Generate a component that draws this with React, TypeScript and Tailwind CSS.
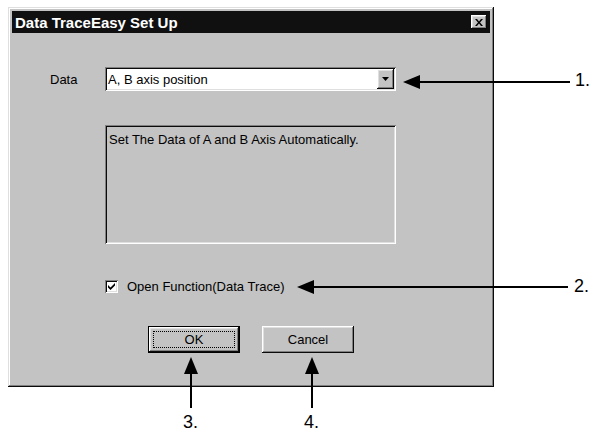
import React from "react";

const raised =
  "shadow-[inset_-1px_-1px_#0a0a0a,inset_1px_1px_#ffffff,inset_-2px_-2px_#808080,inset_2px_2px_#dfdfdf]";
const sunken =
  "shadow-[inset_1px_1px_#808080,inset_-1px_-1px_#ffffff,inset_2px_2px_#0a0a0a,inset_-2px_-2px_#dfdfdf]";

function CloseButton() {
  return (
    <div className={`w-[16px] h-[14px] bg-[#c3c3c3] flex items-center justify-center ${raised}`}>
      <svg width="8" height="7" viewBox="0 0 8 7">
        <path d="M0 0h2l2 2.5L6 0h2L5 3.5 8 7H6L4 4.5 2 7H0l3-3.5z" fill="#000" />
      </svg>
    </div>
  );
}

function DropArrow() {
  return (
    <div className={`w-[17px] h-full bg-[#c3c3c3] flex items-center justify-center ${raised}`}>
      <svg width="7" height="4" viewBox="0 0 7 4">
        <path d="M0 0h7L3.5 4z" fill="#000" />
      </svg>
    </div>
  );
}

function Checkbox() {
  return (
    <div className={`w-[13px] h-[13px] bg-white flex items-center justify-center ${sunken}`}>
      <svg width="7" height="7" viewBox="0 0 7 7">
        <path d="M0 2l2.5 2.5L7 0v2.5L2.5 7 0 4.5z" fill="#000" />
      </svg>
    </div>
  );
}

// annotation arrows drawn over the dialog
function Callouts() {
  return (
    <>
      <svg className="absolute inset-0 pointer-events-none" width="593" height="432">
        <path d="M403 82L420 75V89z" fill="#000" />
        <line x1="418" y1="82" x2="570" y2="82" stroke="#000" strokeWidth="2" />
        <path d="M297 287L314 280V294z" fill="#000" />
        <line x1="312" y1="287" x2="568" y2="287" stroke="#000" strokeWidth="2" />
        <path d="M191 357L184 374H198z" fill="#000" />
        <line x1="191" y1="372" x2="191" y2="408" stroke="#000" strokeWidth="2" />
        <path d="M312 357L305 374H319z" fill="#000" />
        <line x1="312" y1="372" x2="312" y2="408" stroke="#000" strokeWidth="2" />
      </svg>
      <span className="absolute left-[575px] top-[71px] text-[18px] leading-none">1.</span>
      <span className="absolute left-[574px] top-[277px] text-[18px] leading-none">2.</span>
      <span className="absolute left-[183px] top-[413px] text-[18px] leading-none">3.</span>
      <span className="absolute left-[304px] top-[413px] text-[18px] leading-none">4.</span>
    </>
  );
}

export default function App() {
  return (
    <div className="relative w-[593px] h-[432px] bg-white overflow-hidden text-black font-['Liberation_Sans',Arial,sans-serif]">
      <div className="ml-[8px] mt-[7px] w-[486px] h-[380px] bg-[#c3c3c3] p-[4px] flex flex-col shadow-[inset_-1px_-1px_#0a0a0a,inset_1px_1px_#dfdfdf,inset_-2px_-2px_#808080,inset_2px_2px_#ffffff]">
        <div className="h-[22px] bg-[#101010] flex items-center justify-between pl-[3px] pr-[3px]">
          <span className="text-white font-bold text-[15px] leading-none">Data TraceEasy Set Up</span>
          <CloseButton />
        </div>

        <div className="flex flex-col pl-[38px] pt-[34px] text-[13px] leading-none">
          <div className="flex items-center">
            <span className="w-[55px]">Data</span>
            <div className={`w-[291px] h-[24px] bg-white p-[2px] flex items-center ${sunken}`}>
              <span className="flex-1 pl-[1px]">A, B axis position</span>
              <DropArrow />
            </div>
          </div>

          <div className={`ml-[55px] mt-[34px] w-[291px] h-[119px] px-[4px] pt-[8px] ${sunken}`}>
            Set The Data of A and B Axis Automatically.
          </div>

          <div className="ml-[55px] mt-[36px] flex items-center gap-[9px]">
            <Checkbox />
            <span>Open Function(Data Trace)</span>
          </div>
        </div>

        <div className="mt-[33px] flex justify-center gap-[22px] text-[13px] leading-none">
          <div className="w-[92px] h-[27px] border border-black">
            <div className={`h-full p-[4px] ${raised}`}>
              <div className="h-full border border-dotted border-black flex items-center justify-center">
                OK
              </div>
            </div>
          </div>
          <div className={`w-[92px] h-[27px] flex items-center justify-center ${raised}`}>Cancel</div>
        </div>
      </div>
      <Callouts />
    </div>
  );
}
